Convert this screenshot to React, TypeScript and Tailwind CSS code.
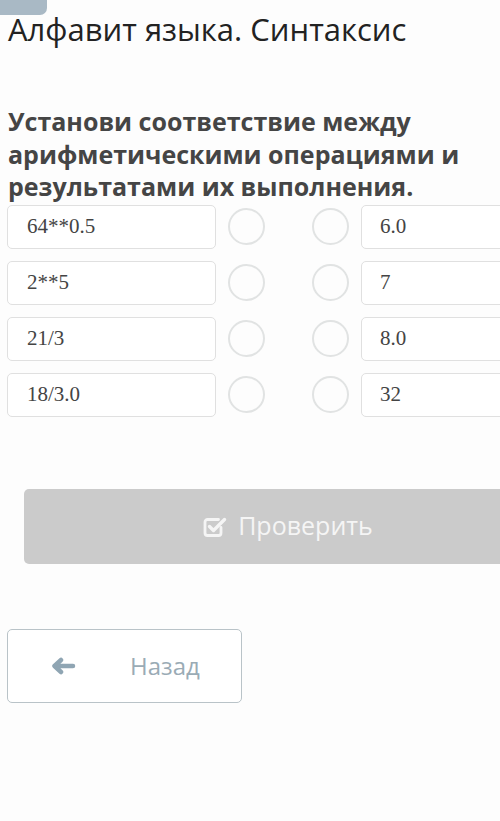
import React from 'react'

const PAIRS: [string, string][] = [
  ['64**0.5', '6.0'],
  ['2**5', '7'],
  ['21/3', '8.0'],
  ['18/3.0', '32'],
]

function CheckSquareIcon() {
  return (
    <svg width="24" height="23" viewBox="0 0 24 23" fill="none">
      <path
        d="M18 12.5V18a2.5 2.5 0 0 1-2.5 2.5h-11A2.5 2.5 0 0 1 2 18V7a2.5 2.5 0 0 1 2.5-2.5h11"
        stroke="#f5f5f5"
        strokeWidth="2.8"
        strokeLinecap="round"
      />
      <path
        d="M6.5 11.5l4 4L21.5 4.5"
        stroke="#f5f5f5"
        strokeWidth="3.4"
        strokeLinecap="round"
        strokeLinejoin="round"
      />
    </svg>
  )
}

function ArrowLeftIcon() {
  return (
    <svg width="26" height="18" viewBox="0 0 26 18" fill="none">
      <path
        d="M23 9H5M11 3L4.5 9l6.5 6"
        stroke="#8fa5b3"
        strokeWidth="4.5"
        strokeLinecap="round"
        strokeLinejoin="round"
      />
    </svg>
  )
}

function Radio() {
  return <div className="h-[37px] w-[37px] shrink-0 rounded-full border-[2.5px] border-[#e1e3e3]" />
}

export default function App() {
  return (
    <div
      className="relative min-h-[821px] w-[500px] overflow-hidden bg-[#fdfdfd] text-[#222]"
      style={{ fontFamily: '"Open Sans", "Noto Sans", sans-serif' }}
    >
      <div className="absolute left-0 top-0 h-[15px] w-[47px] rounded-br-[7px] bg-[#a9b9c5]" />

      <h1 className="pl-2 pt-[9px] text-[31px] leading-[40px] font-normal text-[#222]">
        Алфавит языка. Синтаксис
      </h1>

      <p className="mt-[56px] pl-2 pr-2 text-[25px] leading-[32.5px] font-bold text-[#454545]">
        Установи соответствие между арифметическими операциями и результатами их выполнения.
      </p>

      <div className="mt-[2px] flex flex-col gap-[12px]">
        {PAIRS.map(([left, right]) => (
          <div key={left} className="flex items-center">
            <div
              className="ml-[7px] flex h-[44px] w-[209px] shrink-0 items-center rounded-[5px] border border-[#e0e0e0] bg-white pl-[19px] text-[21px] text-[#444]"
              style={{ fontFamily: '"Liberation Serif", serif' }}
            >
              {left}
            </div>
            <div className="ml-[12px]">
              <Radio />
            </div>
            <div className="ml-[47px]">
              <Radio />
            </div>
            <div
              className="ml-[12px] flex h-[44px] w-[180px] shrink-0 items-center rounded-[5px] border border-[#e0e0e0] bg-white pl-[18px] text-[21px] text-[#444]"
              style={{ fontFamily: '"Liberation Serif", serif' }}
            >
              {right}
            </div>
          </div>
        ))}
      </div>

      <div className="ml-[24px] mt-[72px] flex h-[75px] w-[528px] items-center justify-center gap-[11px] rounded-[5px] bg-[#cbcbcb] text-[25px] text-[#f5f5f5]">
        <CheckSquareIcon />
        <span>Проверить</span>
      </div>

      <div className="ml-[7px] mt-[65px] flex h-[74px] w-[235px] items-center rounded-[5px] border-[1.5px] border-[#b9c3c8] bg-white">
        <div className="ml-[42px]">
          <ArrowLeftIcon />
        </div>
        <span className="ml-[54px] text-[24px] text-[#9aabb5]">Назад</span>
      </div>
    </div>
  )
}
